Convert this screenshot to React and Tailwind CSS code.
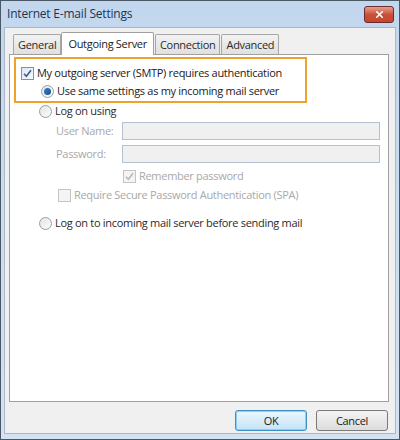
import { X } from 'lucide-react';

const font = { fontFamily: "'Open Sans', 'Noto Sans', sans-serif" };

function CheckBox({ checked, disabled }) {
  return (
    <span
      className={`flex items-center justify-center w-[13px] h-[13px] border shrink-0 ${
        disabled ? 'border-[#c4c4c4] bg-[#f4f4f4]' : 'border-[#8e8f8f] bg-gradient-to-br from-[#dce6f2] to-[#f8fbff]'
      }`}
    >
      {checked && (
        <svg width="9" height="9" viewBox="0 0 9 9">
          <path
            d="M1 4.8 L3.4 7.2 L8 1.2"
            fill="none"
            stroke={disabled ? '#b8b8b8' : '#3d5a8a'}
            strokeWidth="1.6"
          />
        </svg>
      )}
    </span>
  );
}

function Radio({ checked }) {
  return (
    <span className="flex items-center justify-center w-[13px] h-[13px] rounded-full border border-[#9aa0a6] bg-gradient-to-br from-[#e2e6ea] to-[#fafafa] shrink-0">
      {checked && <span className="w-[7px] h-[7px] rounded-full bg-gradient-to-br from-[#3a82c4] to-[#1c4f8c]" />}
    </span>
  );
}

function Tab({ label, active }) {
  return active ? (
    <div className="h-[23px] -mb-px px-[6px] flex items-center bg-white border border-b-0 border-[#a0a0a0] rounded-t-[2px] z-10 text-[#1a1a1a]">
      {label}
    </div>
  ) : (
    <div className="h-[20px] mt-[3px] px-[4px] flex items-center bg-gradient-to-b from-[#f2f2f2] to-[#e0e0e0] border border-b-0 border-[#a6a6a6] rounded-t-[2px] text-[#2a2a2a]">
      {label}
    </div>
  );
}

export default function App() {
  return (
    <div
      className="w-[400px] h-[440px] flex flex-col bg-gradient-to-b from-[#c2d7ee] to-[#d4e3f2] border border-[#4a5866] text-[11px] tracking-[-0.3px] leading-[14px] whitespace-nowrap"
      style={font}
    >
      {/* Title bar */}
      <div className="h-[26px] flex items-center justify-between pl-[6px] pr-[5px]">
        <span className="text-[12px] tracking-[-0.2px] text-[#1e3450]">Internet E-mail Settings</span>
        <div className="w-[30px] h-[17px] mt-[1px] flex items-center justify-center rounded-[3px] border border-[#6b2c2c] bg-gradient-to-b from-[#e3a08e] via-[#c9503a] to-[#c4452f]">
          <X size={11} strokeWidth={3.5} className="text-white" />
        </div>
      </div>

      {/* Dialog body */}
      <div className="flex-1 mx-[3px] mb-[5px] bg-[#f0f0f0] border border-[#a9b8c8] flex flex-col pl-[4px] pr-[6px] pt-[2px]">
        {/* Tabs */}
        <div className="flex items-end pl-[4px] h-[24px]">
          <Tab label="General" />
          <Tab label="Outgoing Server" active />
          <div className="ml-[1px]">
            <Tab label="Connection" />
          </div>
          <div className="ml-[1px]">
            <Tab label="Advanced" />
          </div>
        </div>

        {/* Panel */}
        <div className="h-[348px] bg-white border border-[#a0a0a0] flex flex-col pl-[4px] pt-[2px]">
          <div className="w-[293px] h-[46px] border-2 border-[#f0a12c] flex flex-col pl-[5px] pt-[7px]">
            <div className="flex items-center gap-[3px] h-[14px]">
              <CheckBox checked />
              <span className="text-[#1a1a1a]">My outgoing server (SMTP) requires authentication</span>
            </div>
            <div className="flex items-center gap-[3px] h-[14px] mt-[4px] pl-[20px]">
              <Radio checked />
              <span className="text-[#1a1a1a]">Use same settings as my incoming mail server</span>
            </div>
          </div>

          <div className="flex items-center gap-[3px] h-[14px] mt-[1px] pl-[25px]">
            <Radio />
            <span className="text-[#2a2a2a]">Log on using</span>
          </div>

          <div className="flex items-center h-[18px] mt-[4px] pl-[42px]">
            <span className="w-[66px] text-[#a8a8a8]">User Name:</span>
            <div className="w-[258px] h-[18px] bg-[#f0f0f0] border border-[#b4c2d0]" />
          </div>
          <div className="flex items-center h-[18px] mt-[5px] pl-[42px]">
            <span className="w-[66px] text-[#a8a8a8]">Password:</span>
            <div className="w-[258px] h-[18px] bg-[#f0f0f0] border border-[#b4c2d0]" />
          </div>

          <div className="flex items-center gap-[3px] h-[14px] mt-[6px] pl-[109px]">
            <CheckBox checked disabled />
            <span className="text-[#a8a8a8]">Remember password</span>
          </div>
          <div className="flex items-center gap-[3px] h-[14px] mt-[5px] pl-[44px]">
            <CheckBox disabled />
            <span className="text-[#a8a8a8]">Require Secure Password Authentication (SPA)</span>
          </div>

          <div className="flex items-center gap-[3px] h-[14px] mt-[14px] pl-[25px]">
            <Radio />
            <span className="text-[#2a2a2a]">Log on to incoming mail server before sending mail</span>
          </div>
        </div>

        {/* Buttons */}
        <div className="flex justify-end gap-[9px] mt-[8px] pr-[1px]">
          <button className="w-[72px] h-[21px] rounded-[3px] border border-[#3d8fc6] bg-gradient-to-b from-[#eaf6fd] to-[#c6e4f6] shadow-[inset_0_0_0_1px_#8fd0f2] text-[#1a1a1a]">
            OK
          </button>
          <button className="w-[72px] h-[21px] rounded-[3px] border border-[#7a7a7a] bg-gradient-to-b from-[#f4f4f4] to-[#dcdcdc] text-[#1a1a1a]">
            Cancel
          </button>
        </div>
      </div>
    </div>
  );
}
